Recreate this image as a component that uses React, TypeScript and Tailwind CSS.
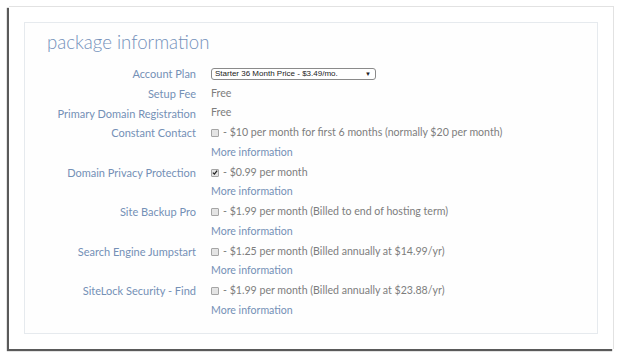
import React from "react";

type Addon = {
  label: string;
  text: string;
  checked?: boolean;
};

const addons: Addon[] = [
  { label: "Constant Contact", text: "- $10 per month for first 6 months (normally $20 per month)" },
  { label: "Domain Privacy Protection", text: "- $0.99 per month", checked: true },
  { label: "Site Backup Pro", text: "- $1.99 per month (Billed to end of hosting term)" },
  { label: "Search Engine Jumpstart", text: "- $1.25 per month (Billed annually at $14.99/yr)" },
  { label: "SiteLock Security - Find", text: "- $1.99 per month (Billed annually at $23.88/yr)" },
];

function Box({ checked }: { checked?: boolean }) {
  return (
    <span className="mr-[4px] inline-flex h-[8px] w-[8px] items-center justify-center rounded-[1px] border border-[#a5a5a5] bg-[#e4e4e4]">
      {checked && (
        <svg width="7" height="7" viewBox="0 0 7 7">
          <path d="M1 3.6 L2.8 5.4 L6 1.2" stroke="#222" strokeWidth="1.5" fill="none" />
        </svg>
      )}
    </span>
  );
}

function Label({ children }: { children: React.ReactNode }) {
  return <div className="h-[19.75px] text-right text-[11px] leading-[19.75px] text-[#7490b6]">{children}</div>;
}

function Value({ children }: { children: React.ReactNode }) {
  return <div className="flex h-[19.75px] items-center text-[10.6px] text-[#7d7d7d]">{children}</div>;
}

export default function App() {
  return (
    <div className="h-[357px] w-[622px] bg-white pl-[9px] pt-[6px] font-['Lato','Open_Sans',sans-serif]">
      <div className="h-[343px] w-[605px] border-t border-r border-[#e2e2e2] bg-white pl-[15px] pr-[15px] pt-[15px] shadow-[-2px_2px_1px_#5a5a5a]">
        <div className="h-[312px] w-[574px] border border-[#e6eaee] bg-[#fefefe]">
          <h1 className="pl-[22px] pt-[6px] text-[18.6px] font-light leading-[26px] text-[#7390ba]">
            package information
          </h1>
          <div className="mt-[9px] grid grid-cols-[171px_1fr] gap-x-[15px]">
            <Label>Account Plan</Label>
            <div className="flex h-[19.75px] items-center">
              <div className="flex h-[12px] w-[165px] items-center justify-between rounded-[3px] border border-[#8a8a8a] bg-white pl-[3px] pr-[4px] font-['Liberation_Sans',Arial,sans-serif] text-[8px] leading-none text-[#222]">
                <span>Starter 36 Month Price - $3.49/mo.</span>
                <span className="text-[6px]">▼</span>
              </div>
            </div>
            <Label>Setup Fee</Label>
            <Value>Free</Value>
            <Label>Primary Domain Registration</Label>
            <Value>Free</Value>
            {addons.map((a) => (
              <React.Fragment key={a.label}>
                <Label>{a.label}</Label>
                <Value>
                  <Box checked={a.checked} />
                  {a.text}
                </Value>
                <div className="h-[19.75px]" />
                <div className="flex h-[19.75px] items-center text-[10.6px] text-[#7490b6]">More information</div>
              </React.Fragment>
            ))}
          </div>
        </div>
      </div>
    </div>
  );
}
